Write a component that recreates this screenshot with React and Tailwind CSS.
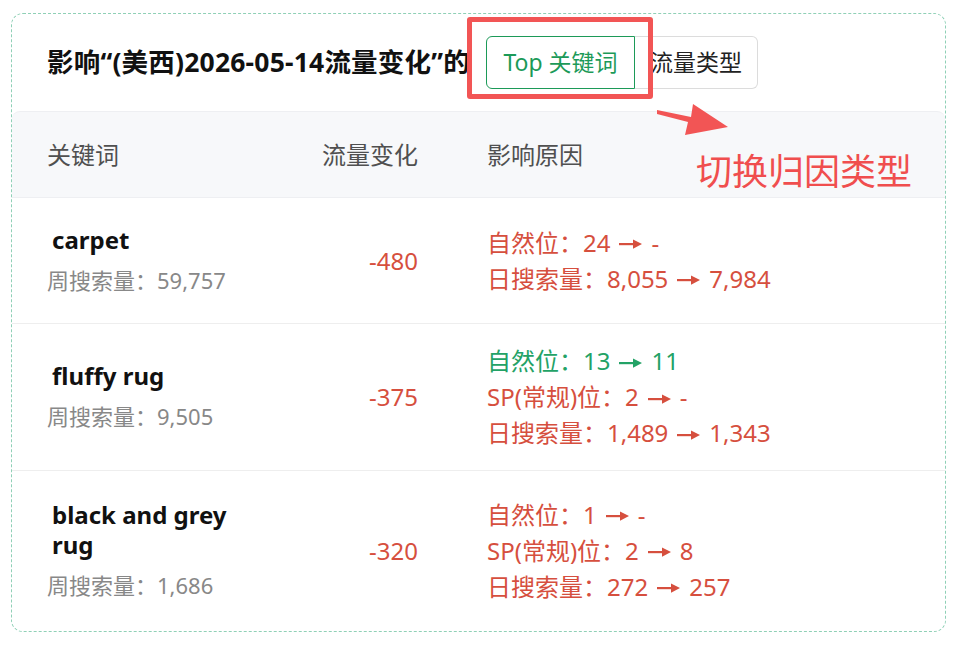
import React from "react";

const RED = "text-[#d64f3e]";
const GREEN = "text-[#23a266]";

const Arrow = () => (
  <svg
    className="inline-block align-middle mx-[9px] relative -top-[1px]"
    width="23"
    height="12"
    viewBox="0 0 23 12"
    fill="currentColor"
  >
    <rect x="0" y="5" width="17" height="2.2" />
    <polygon points="14,1.5 23,6.1 14,10.7" />
  </svg>
);

const rows = [
  {
    kw: "carpet",
    vol: "59,757",
    change: "-480",
    h: "h-[126px]",
    reasons: [
      { a: "自然位：24", b: "-", c: RED },
      { a: "日搜索量：8,055", b: "7,984", c: RED },
    ],
  },
  {
    kw: "fluffy rug",
    vol: "9,505",
    change: "-375",
    h: "h-[147px]",
    reasons: [
      { a: "自然位：13", b: "11", c: GREEN },
      { a: "SP(常规)位：2", b: "-", c: RED },
      { a: "日搜索量：1,489", b: "1,343", c: RED },
    ],
  },
  {
    kw: "black and grey rug",
    vol: "1,686",
    change: "-320",
    h: "h-[159px]",
    reasons: [
      { a: "自然位：1", b: "-", c: RED },
      { a: "SP(常规)位：2", b: "8", c: RED },
      { a: "日搜索量：272", b: "257", c: RED },
    ],
  },
];

export default function App() {
  return (
    <div
      className="relative w-[966px] h-[645px] bg-white overflow-hidden"
      style={{ fontFamily: '"Noto Sans", "Noto Sans CJK SC", sans-serif' }}
    >
      <div className="absolute left-[11px] top-[13px] w-[935px] h-[619px] border border-dashed border-[#8fd0b6] rounded-[12px] flex flex-col">
        {/* title row */}
        <div className="h-[97px] flex items-center pl-[35px] shrink-0">
          <div className="w-[417px] text-[26.5px] tracking-[0.2px] font-bold text-[#111] leading-none whitespace-nowrap">
            影响“(美西)2026-05-14流量变化”的
          </div>
          <div className="flex ml-[22px] h-[53px]">
            <div className="h-full w-[149px] flex items-center justify-center border border-[#1c9a58] rounded-l-[6px] text-[#1c9a58] text-[23px] leading-none">
              Top 关键词
            </div>
            <div className="h-full w-[123px] flex items-center justify-center border border-l-0 border-[#dcdcdc] rounded-r-[6px] text-[#222] text-[23px] leading-none">
              流量类型
            </div>
          </div>
        </div>

        {/* header */}
        <div className="h-[87px] shrink-0 flex items-center bg-[#f7f8fa] rounded-t-[8px] border-y border-[#eeeff2] pl-[35px] text-[24px] text-[#505050]">
          <div className="w-[230px]">关键词</div>
          <div className="w-[141px] text-right">流量变化</div>
          <div className="pl-[69px]">影响原因</div>
        </div>

        {/* rows */}
        {rows.map((r, i) => (
          <div
            key={i}
            className={`${r.h} shrink-0 flex items-center pl-[35px] ${
              i < rows.length - 1 ? "border-b border-[#eeeeee]" : ""
            }`}
          >
            <div className="w-[230px] flex flex-col">
              <div className="ml-[5px] w-[210px] text-[24px] font-bold text-[#111] leading-[30px]">
                {r.kw}
              </div>
              <div className="mt-[8px] text-[22px] text-[#888] leading-[34px] whitespace-nowrap">
                周搜索量：{r.vol}
              </div>
            </div>
            <div className={`w-[141px] text-right text-[24px] ${RED}`}>{r.change}</div>
            <div className="pl-[69px] flex flex-col">
              {r.reasons.map((x, j) => (
                <div key={j} className={`text-[24px] leading-[36px] whitespace-nowrap ${x.c}`}>
                  <span>{x.a}</span>
                  <Arrow />
                  <span>{x.b}</span>
                </div>
              ))}
            </div>
          </div>
        ))}
      </div>

      {/* annotation: red box */}
      <div className="absolute left-[467px] top-[17px] w-[186px] h-[82px] border-[5px] border-[#f25555] rounded-[3px]" />

      {/* annotation: arrow */}
      <svg className="absolute left-0 top-0" width="966" height="645" viewBox="0 0 966 645">
        <polygon
          points="657,110 691,117 693,104 728,127 685,135 688,122 657,114"
          fill="#f25555"
        />
      </svg>

      {/* annotation: label */}
      <div className="absolute left-[696px] top-[150px] text-[36px] leading-[44px] text-[#f04e4e] whitespace-nowrap">
        切换归因类型
      </div>
    </div>
  );
}
